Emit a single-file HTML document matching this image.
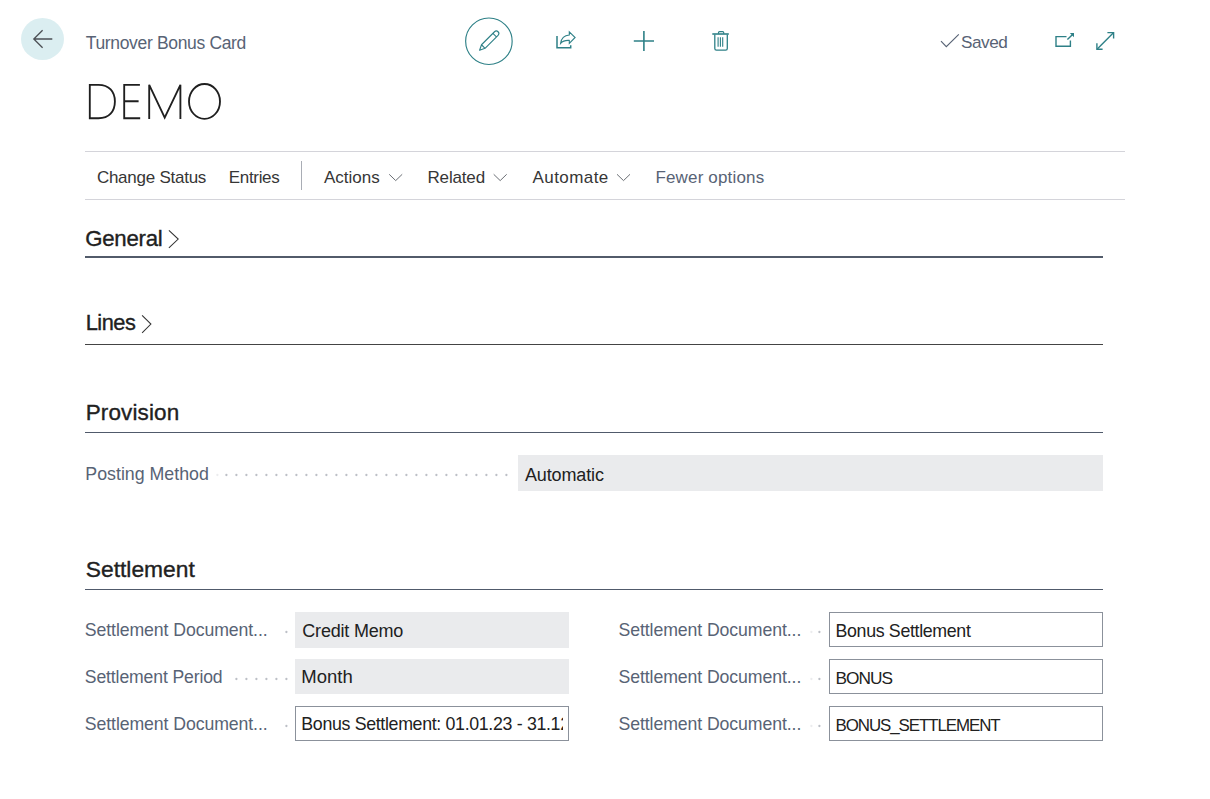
<!DOCTYPE html>
<html><head><meta charset="utf-8">
<style>
html,body{margin:0;padding:0;background:#fff;}
body{width:1210px;height:799px;position:relative;overflow:hidden;font-family:"Liberation Sans",sans-serif;}
.t{position:absolute;white-space:nowrap;line-height:1;}
.f{position:absolute;background:#eaebed;box-sizing:border-box;}
.b{position:absolute;background:#fff;border:1px solid #8b919b;box-sizing:border-box;}
</style></head><body>
<div style="position:absolute;left:21px;top:18px;width:43px;height:42px;border-radius:50%;background:#dbeef1"></div>
<div class="t" style="left:85.70px;top:34.69px;font-size:17.5px;color:#586375;letter-spacing:-0.333px;">Turnover Bonus Card</div>
<div class="t" style="left:961.10px;top:34.14px;font-size:17.2px;color:#586375;letter-spacing:-0.500px;">Saved</div>
<div style="position:absolute;left:85px;top:151px;width:1040px;height:1px;background:#d4d4da"></div>
<div style="position:absolute;left:85px;top:199px;width:1040px;height:1px;background:#d4d4da"></div>
<div style="position:absolute;left:301px;top:161px;width:1px;height:29px;background:#a9adb5"></div>
<div style="position:absolute;left:85px;top:256px;width:1018px;height:2px;background:#525b6a"></div>
<div style="position:absolute;left:85px;top:344px;width:1018px;height:1px;background:#444444"></div>
<div style="position:absolute;left:85px;top:432px;width:1018px;height:1px;background:#505a6b"></div>
<div style="position:absolute;left:85px;top:589px;width:1018px;height:1px;background:#505a6b"></div>
<div class="f" style="left:518px;top:455px;width:585px;height:36px"></div>
<div class="f" style="left:295px;top:612px;width:274px;height:35.5px"></div>
<div class="f" style="left:295px;top:659px;width:274px;height:35px"></div>
<div class="b" style="left:295px;top:706px;width:274px;height:35px"></div>
<div class="b" style="left:829px;top:612px;width:274px;height:35px"></div>
<div class="b" style="left:829px;top:659px;width:274px;height:35px"></div>
<div class="b" style="left:829px;top:706px;width:274px;height:35px"></div>
<div class="t" style="left:96.90px;top:168.61px;font-size:17.0px;color:#363636;letter-spacing:-0.250px;">Change Status</div>
<div class="t" style="left:228.80px;top:168.61px;font-size:17.0px;color:#363636;letter-spacing:-0.333px;">Entries</div>
<div class="t" style="left:323.90px;top:168.61px;font-size:17.0px;color:#363636;letter-spacing:0.000px;">Actions</div>
<div class="t" style="left:427.50px;top:168.61px;font-size:17.0px;color:#363636;letter-spacing:-0.167px;">Related</div>
<div class="t" style="left:532.50px;top:168.61px;font-size:17.0px;color:#363636;letter-spacing:0.429px;">Automate</div>
<div class="t" style="left:655.40px;top:168.61px;font-size:17.0px;color:#586375;letter-spacing:0.167px;">Fewer options</div>
<div class="t" style="left:85.25px;top:227.66px;font-size:22.2px;color:#212121;letter-spacing:-0.250px;-webkit-text-stroke:0.35px #212121;">General</div>
<div class="t" style="left:85.70px;top:312.05px;font-size:21.8px;color:#212121;letter-spacing:-0.500px;-webkit-text-stroke:0.35px #212121;">Lines</div>
<div class="t" style="left:85.70px;top:402.40px;font-size:22.5px;color:#212121;letter-spacing:0.125px;-webkit-text-stroke:0.35px #212121;">Provision</div>
<div class="t" style="left:85.80px;top:557.80px;font-size:22.8px;color:#212121;letter-spacing:-0.000px;-webkit-text-stroke:0.35px #212121;">Settlement</div>
<div class="t" style="left:85.30px;top:466.43px;font-size:17.8px;color:#586375;letter-spacing:-0.000px;">Posting Method</div>
<div class="t" style="left:524.90px;top:465.86px;font-size:18.0px;color:#212121;letter-spacing:-0.125px;">Automatic</div>
<div class="t" style="left:84.80px;top:622.22px;font-size:17.7px;color:#586375;letter-spacing:-0.095px;">Settlement Document...</div>
<div class="t" style="left:84.80px;top:669.30px;font-size:17.6px;color:#586375;letter-spacing:-0.125px;">Settlement Period</div>
<div class="t" style="left:84.80px;top:716.22px;font-size:17.7px;color:#586375;letter-spacing:-0.095px;">Settlement Document...</div>
<div class="t" style="left:618.50px;top:622.22px;font-size:17.7px;color:#586375;letter-spacing:-0.095px;">Settlement Document...</div>
<div class="t" style="left:618.50px;top:669.22px;font-size:17.7px;color:#586375;letter-spacing:-0.095px;">Settlement Document...</div>
<div class="t" style="left:618.50px;top:716.22px;font-size:17.7px;color:#586375;letter-spacing:-0.095px;">Settlement Document...</div>
<div class="t" style="left:302.30px;top:621.76px;font-size:18.0px;color:#212121;letter-spacing:-0.200px;">Credit Memo</div>
<div class="t" style="left:301.30px;top:668.34px;font-size:18.5px;color:#212121;letter-spacing:-0.000px;">Month</div>
<div class="t" style="left:835.50px;top:622.83px;font-size:17.8px;color:#212121;letter-spacing:-0.333px;">Bonus Settlement</div>
<div class="t" style="left:835.50px;top:670.26px;font-size:17.3px;color:#212121;letter-spacing:-1.000px;">BONUS</div>
<div class="t" style="left:835.50px;top:717.59px;font-size:16.9px;color:#212121;letter-spacing:-1.067px;">BONUS_SETTLEMENT</div>
<div style="position:absolute;left:296px;top:707px;width:267px;height:33px;overflow:hidden"><div class="t" style="left:5.30px;top:8.93px;font-size:17.8px;color:#212121;letter-spacing:-0.333px">Bonus Settlement: 01.01.23 - 31.12.23</div></div>
<svg width="1210" height="799" style="position:absolute;left:0;top:0">
<g fill="none" stroke-linecap="butt" stroke-linejoin="miter">
<!-- back arrow -->
<path d="M42.6,30.3 L33.8,39 L42.6,47.7 M33.8,39 H52.3" stroke="#4b4f54" stroke-width="1.3"/>
<!-- DEMO -->
<g stroke="#1f1f1f" stroke-width="1.85">
<path d="M89.8,84.8 H98.5 C109,84.8 114.9,91.5 114.9,101.5 C114.9,111.5 109,118.2 98.5,118.2 H89.8 Z"/>
<path d="M139.9,84.8 H124.2 V118.2 H140.2 M124.2,101.2 H138.6"/>
<path d="M149.2,118.9 V84.8 L164.7,117.6 L180.4,84.8 V118.9"/>
<ellipse cx="204.5" cy="101.45" rx="15.5" ry="17.4"/>
</g>
<!-- edit circle -->
<circle cx="488.9" cy="41.25" r="23.25" stroke="#2e8087" stroke-width="1.15"/>
<g transform="translate(479.6,50.2) rotate(-45)" stroke="#2e8087" stroke-width="1.1" stroke-linejoin="round">
<path d="M0,0 L5.2,-2.5 H23.6 A2.5,2.5 0 0 1 23.6,2.5 H5.2 Z M5.2,-2.5 V2.5 M21.3,-2.5 V2.5"/>
</g>
<!-- share -->
<path d="M557,36.1 V47.75 H570.7 V45.3" stroke="#2e8087" stroke-width="1.5"/>
<path d="M569.3,31.8 L575.1,37.5 L569.3,43.3 V40.4 C565.5,40.1 562.5,41.2 560.6,43.4 C561.3,38.2 564.8,35.3 569.3,35 Z" stroke="#2e8087" stroke-width="1.1" stroke-linejoin="miter"/>
<!-- plus -->
<path d="M643.9,31 V50.9 M633.8,41 H654" stroke="#2e8087" stroke-width="1.6"/>
<!-- trash -->
<g stroke="#2e8087">
<path d="M712.3,34 H728.8" stroke-width="1.6"/>
<path d="M718.5,33.8 V32.6 Q718.5,31.6 719.5,31.6 H722.7 Q723.7,31.6 723.7,32.6 V33.8" stroke-width="1.2"/>
<path d="M714.8,34.5 V48.6 Q714.8,50.2 716.4,50.2 H725.7 Q727.3,50.2 727.3,48.6 V34.5" stroke-width="1.3"/>
<path d="M718.1,37.2 V46.7 M720.4,37.2 V46.7 M722.7,37.2 V46.7" stroke-width="1.1"/>
</g>
<!-- check -->
<path d="M941,41.2 L946.3,46.6 L958.8,34.3" stroke="#586375" stroke-width="1.15"/>
<!-- open new -->
<g stroke="#2e8087" stroke-width="1.4">
<path d="M1066.5,36.6 H1056 V46.2 H1070.4 V40.4"/>
<path d="M1067.4,39.6 L1072.6,34.4"/>
</g>
<path d="M1069.8,33 H1074 V37.2 Z" fill="#2e8087"/>
<!-- expand -->
<g stroke="#2e8087" stroke-width="1.4">
<path d="M1097.3,48.9 L1113.2,33"/>
<path d="M1107.4,32.6 H1113.6 V38.6"/>
<path d="M1096.9,43.3 V49.3 H1102.6"/>
</g>
<!-- action chevrons -->
<g stroke="#6b6f75" stroke-width="1">
<path d="M389.2,174.3 L395.7,180.6 L402.2,174.3"/>
<path d="M493.7,174.3 L500.2,180.6 L506.7,174.3"/>
<path d="M617,174.3 L623.5,180.6 L630,174.3"/>
</g>
<!-- header chevrons -->
<g stroke="#333" stroke-width="1.05">
<path d="M168.9,230.4 L178.2,239.1 L168.9,247.8"/>
<path d="M142.1,315.4 L150.9,324.1 L142.1,332.8"/>
</g>
</g>
<circle cx="226.4" cy="475" r="1.15" fill="#bcbfc6" opacity="1"/><circle cx="236.4" cy="475" r="1.15" fill="#bcbfc6" opacity="1"/><circle cx="246.4" cy="475" r="1.15" fill="#bcbfc6" opacity="1"/><circle cx="256.4" cy="475" r="1.15" fill="#bcbfc6" opacity="1"/><circle cx="266.4" cy="475" r="1.15" fill="#bcbfc6" opacity="1"/><circle cx="276.4" cy="475" r="1.15" fill="#bcbfc6" opacity="1"/><circle cx="286.4" cy="475" r="1.15" fill="#bcbfc6" opacity="1"/><circle cx="296.4" cy="475" r="1.15" fill="#bcbfc6" opacity="1"/><circle cx="306.4" cy="475" r="1.15" fill="#bcbfc6" opacity="1"/><circle cx="316.4" cy="475" r="1.15" fill="#bcbfc6" opacity="1"/><circle cx="326.4" cy="475" r="1.15" fill="#bcbfc6" opacity="1"/><circle cx="336.4" cy="475" r="1.15" fill="#bcbfc6" opacity="1"/><circle cx="346.4" cy="475" r="1.15" fill="#bcbfc6" opacity="1"/><circle cx="356.4" cy="475" r="1.15" fill="#bcbfc6" opacity="1"/><circle cx="366.4" cy="475" r="1.15" fill="#bcbfc6" opacity="1"/><circle cx="376.4" cy="475" r="1.15" fill="#bcbfc6" opacity="1"/><circle cx="386.4" cy="475" r="1.15" fill="#bcbfc6" opacity="1"/><circle cx="396.4" cy="475" r="1.15" fill="#bcbfc6" opacity="1"/><circle cx="406.4" cy="475" r="1.15" fill="#bcbfc6" opacity="1"/><circle cx="416.4" cy="475" r="1.15" fill="#bcbfc6" opacity="1"/><circle cx="426.4" cy="475" r="1.15" fill="#bcbfc6" opacity="1"/><circle cx="436.4" cy="475" r="1.15" fill="#bcbfc6" opacity="1"/><circle cx="446.4" cy="475" r="1.15" fill="#bcbfc6" opacity="1"/><circle cx="456.4" cy="475" r="1.15" fill="#bcbfc6" opacity="1"/><circle cx="466.4" cy="475" r="1.15" fill="#bcbfc6" opacity="1"/><circle cx="476.4" cy="475" r="1.15" fill="#bcbfc6" opacity="1"/><circle cx="486.4" cy="475" r="1.15" fill="#bcbfc6" opacity="1"/><circle cx="496.4" cy="475" r="1.15" fill="#bcbfc6" opacity="1"/><circle cx="506.4" cy="475" r="1.15" fill="#bcbfc6" opacity="1"/><circle cx="217.4" cy="475" r="1.15" fill="#bcbfc6" opacity="0.3"/><circle cx="286.4" cy="632" r="1.15" fill="#bcbfc6" opacity="1"/><circle cx="286.4" cy="726" r="1.15" fill="#bcbfc6" opacity="1"/><circle cx="236.4" cy="679" r="1.15" fill="#bcbfc6" opacity="1"/><circle cx="246.4" cy="679" r="1.15" fill="#bcbfc6" opacity="1"/><circle cx="256.4" cy="679" r="1.15" fill="#bcbfc6" opacity="1"/><circle cx="266.4" cy="679" r="1.15" fill="#bcbfc6" opacity="1"/><circle cx="276.4" cy="679" r="1.15" fill="#bcbfc6" opacity="1"/><circle cx="286.4" cy="679" r="1.15" fill="#bcbfc6" opacity="1"/><circle cx="819.4" cy="632" r="1.15" fill="#bcbfc6" opacity="1"/><circle cx="811.4" cy="632" r="1.15" fill="#bcbfc6" opacity="0.3"/><circle cx="819.4" cy="679" r="1.15" fill="#bcbfc6" opacity="1"/><circle cx="811.4" cy="679" r="1.15" fill="#bcbfc6" opacity="0.3"/><circle cx="819.4" cy="726" r="1.15" fill="#bcbfc6" opacity="1"/><circle cx="811.4" cy="726" r="1.15" fill="#bcbfc6" opacity="0.3"/>
</svg>

</body></html>
